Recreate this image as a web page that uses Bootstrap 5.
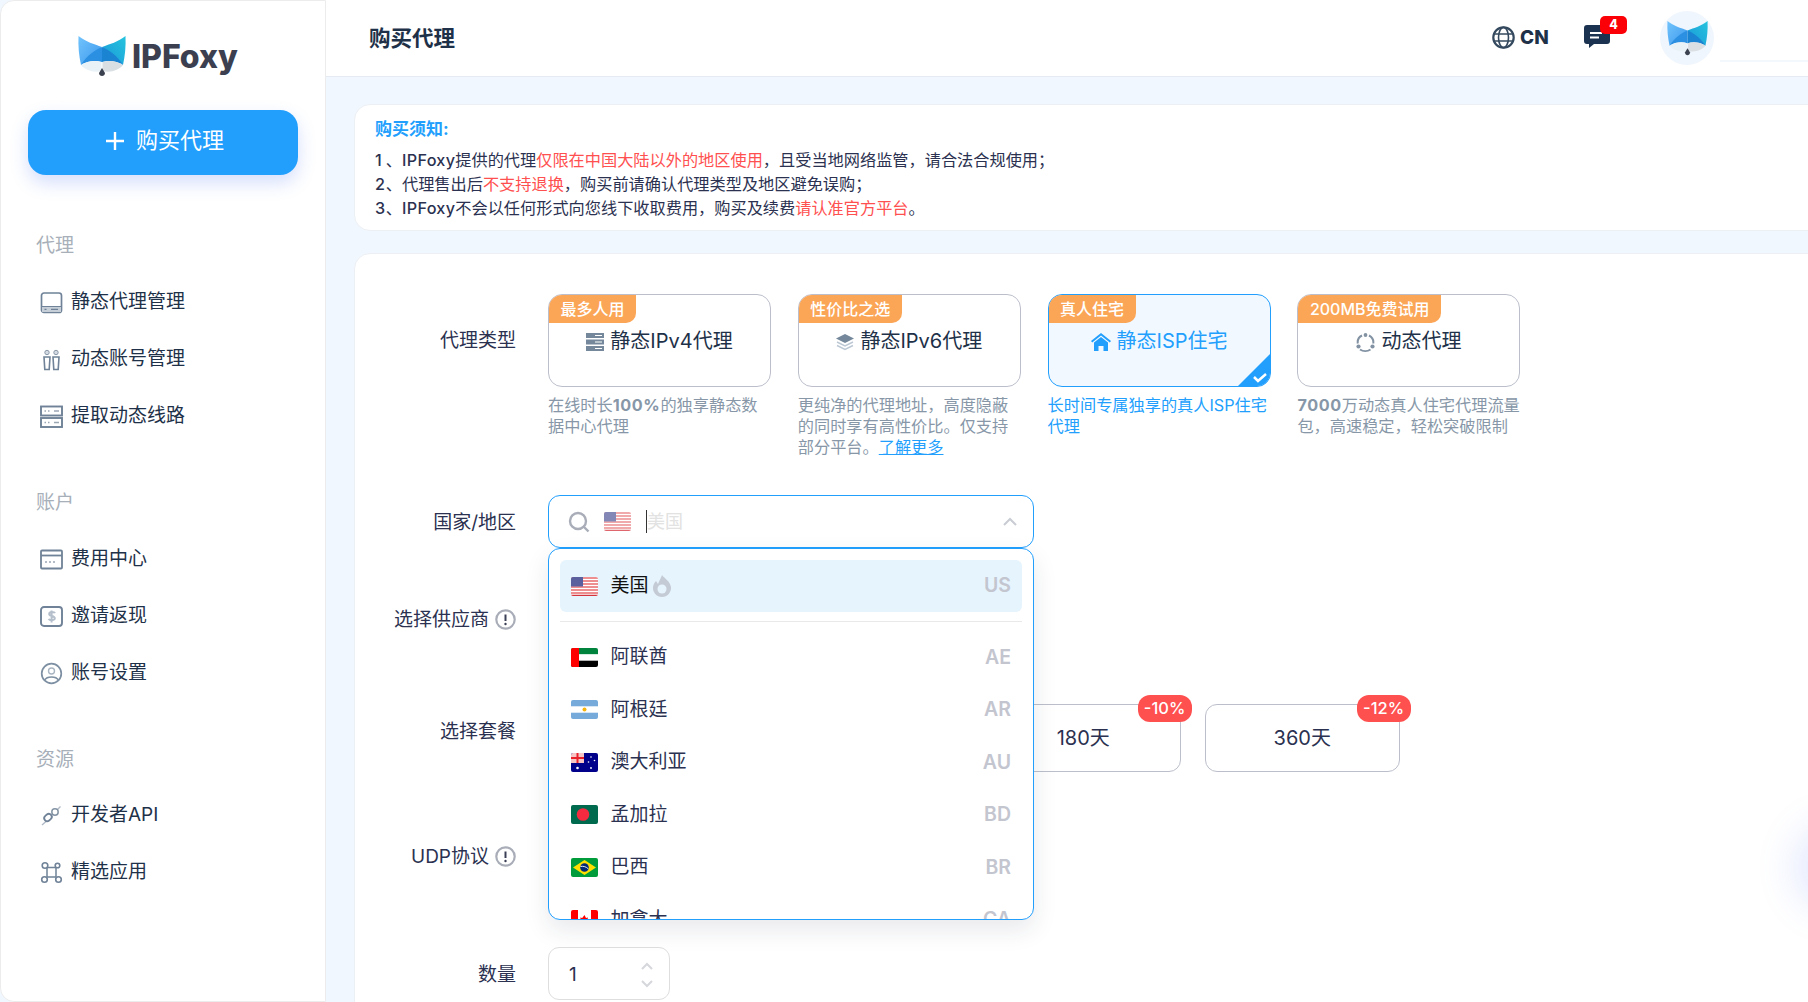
<!DOCTYPE html>
<html lang="zh">
<head>
<meta charset="utf-8">
<title>购买代理</title>
<link href="https://cdn.jsdelivr.net/npm/bootstrap@5.3.0/dist/css/bootstrap.min.css" rel="stylesheet">
<style>
:root{--blue:#229ffd;--ink:#1e3148;--ink2:#2b3150;--muted:#8797a8;--line:#bcbfcb;}
html,body{height:100%;overflow:hidden;}
body{font-family:Inter,"Noto Sans CJK SC","Noto Sans",sans-serif;background:#f1f7fe;color:var(--ink2);width:1808px;height:1002px;}
.shell{height:1002px;width:1808px;}
.side{width:326px;flex:none;background:#fff;border:1px solid #ececec;border-radius:14px 0 0 14px;height:1002px;}
.logo-row{padding:35px 0 0 77px;height:109px;gap:6px;}
.logo-word{font-size:32px;font-weight:800;color:#3b3f4f;line-height:1;letter-spacing:-.05px;margin-top:5px;}
.buy-btn{margin:0 0 0 27px;width:270px;height:65px;border-radius:18px;background:var(--blue);color:#fff;font-size:22px;border:0;box-shadow:0 8px 18px rgba(70,110,240,.22);gap:11px;padding:0 0 4px 3px;}
.buy-btn:hover{background:var(--blue);color:#fff;}
.sec-head{font-size:19px;color:#a7afb9;padding-left:35px;line-height:28px;}
.sec-first{margin-top:57px;}
.sec-next{margin-top:44px;}
.nav-rows{margin-top:14px;}
.nav-last{margin-top:13px;}
.nav-row{height:57px;padding-left:39px;gap:8px;font-size:19px;color:var(--ink);text-decoration:none;}
.nav-row svg{width:23px;height:23px;flex:none;}
.main-col{flex:1;min-width:0;height:1002px;overflow:hidden;position:relative;}
.topbar{height:77px;background:#fff;border-bottom:1px solid #e6ebf2;padding-left:43px;position:relative;}
.page-title{font-size:21.5px;font-weight:600;color:var(--ink);}
.top-tools{position:absolute;top:0;right:0;height:76px;}
.lang{font-size:19px;font-weight:800;color:var(--ink);line-height:23px;}
.tools-inner{width:328px;height:76px;position:relative;}
.t-globe{position:absolute;left:12px;top:26px;gap:5px;}
.t-msg{position:absolute;left:104px;top:25px;width:26px;height:23px;}
.t-badge{position:absolute;left:120px;top:16px;width:27px;height:18px;background:#fb0007;color:#fff;border-radius:5px;font-size:12.5px;font-weight:800;line-height:18px;text-align:center;}
.t-avatar{position:absolute;left:180px;top:11px;width:54px;height:54px;border-radius:50%;background:#f0f6fd;}
.t-line{position:absolute;left:240px;top:60px;width:88px;height:2px;background:#f3f8fe;}
.content{padding:27px 0 0 28px;width:1482px;}
.notice{width:1500px;height:127px;background:#fff;border:1px solid #ecf0f5;border-radius:16px;padding:11px 20px;font-size:16.2px;line-height:24px;}
.notice-title{color:var(--blue);font-weight:700;font-size:17px;line-height:26px;margin-bottom:6px;}
.notice .warn{color:#ff5050;}
.lat{font-weight:500;letter-spacing:.3px;}
.num{display:inline-block;width:10.8px;font-weight:500;}
.form-card{width:1500px;margin-top:22px;background:#fff;border:1px solid #ecf0f5;border-radius:16px;padding:40px 0 0 0;height:900px;position:relative;}
.f-label{width:161px;flex:none;text-align:right;font-size:19px;line-height:28px;color:var(--ink2);margin-right:32px;gap:6px;}
.type-row{height:201px;}
.type-list{gap:26.8px;}
.type-item{width:223px;}
.type-box{height:93px;border:1px solid var(--line);border-radius:14px;position:relative;overflow:hidden;padding-top:32px;font-size:20px;line-height:28px;color:var(--ink);gap:6px;background:#fff;}
.type-tag{position:absolute;left:0;top:0;height:28px;padding:0 11.5px;background:#fba556;color:#fff;font-size:16px;font-weight:500;line-height:28px;border-radius:0 0 10px 0;white-space:nowrap;}
.type-desc{font-size:16.2px;line-height:21px;color:var(--muted);margin-top:8px;}
.type-desc b{font-weight:700;letter-spacing:.6px;}
.type-on .type-box{border-color:var(--blue);background:#f1f8ff;color:var(--blue);}
.type-on .type-desc{color:var(--blue);}
.corner{position:absolute;right:0;bottom:0;width:32px;height:32px;}
.more-link{color:var(--blue);}
.country-row{height:53px;}
.country-row .f-label{padding-top:2px;}
.sel-wrap{width:486px;position:relative;}
.sel-input{height:53px;border:1px solid var(--blue);border-radius:12px;padding:0 12px 0 19px;background:#fff;}
.cursor-bar{width:1px;height:23px;background:#333;margin-left:15px;}
.ph{color:#e2e2e2;font-size:18px;line-height:23px;}
.flag{width:27px;height:19px;flex:none;border-radius:2px;display:block;}
.sel-menu{position:absolute;left:0;top:53px;width:486px;height:372px;border:1px solid var(--blue);border-radius:12px;background:#fff;box-shadow:0 10px 24px rgba(30,40,70,.10);overflow:hidden;z-index:5;padding:11px 11px 0;}
.opt{height:52.5px;padding:0 11px 0 10.500px;font-size:19px;color:var(--ink2);gap:13px;}
.opt-first{height:52px;background:#e6f4fe;border-radius:6px;color:#111;}
.opt-hot{margin-left:-10px;}
.opt-code{margin-left:auto;color:#c3c5cf;font-weight:600;font-size:19.5px;}
.opt-sep{height:1px;background:#e9e9e9;margin:9px 0 9px;}
.plain-row{height:53px;margin-top:44px;}
.plain-row .f-label{padding-top:2px;}
.plan-row{margin-top:59px;height:68px;}
.plan-row .f-label{margin-top:14px;}
.plan-list{gap:24.4px;}
.plan{width:194.6px;height:68px;border:1px solid var(--line);border-radius:12px;position:relative;font-size:20px;color:var(--ink2);background:#fff;}
.plan-off{position:absolute;right:-12px;top:-10px;width:54px;height:27px;border-radius:12px;background:#ff5050;color:#fff;font-size:16.5px;font-weight:500;line-height:27px;text-align:center;}
.udp-row{margin-top:58px;height:53px;}
.qty-row{margin-top:64px;height:53px;}
.qty-row .f-label{padding-top:2px;}
.qty{width:122px;height:53px;border:1px solid #dedede;border-radius:11px;padding:3px 16px 0 20px;font-size:19px;color:var(--ink2);}
.qty-arrows{margin-left:auto;gap:10px;}
.info{width:21px;height:21px;flex:none;}
.glow{position:absolute;right:-60px;top:837px;width:60px;height:60px;border-radius:50%;background:#e9eeff;box-shadow:0 0 40px 12px rgba(105,130,245,.2);}
</style>
</head>
<body>
<div class="shell d-flex">
  <aside class="side">
    <div class="logo-row d-flex align-items-start">
      <svg width="48" height="41" viewBox="0 0 48 41"><defs>
        <linearGradient id="lg1" x1="0" y1="0" x2="1" y2="1"><stop offset="0" stop-color="#72c4fc"/><stop offset="1" stop-color="#3a97ec"/></linearGradient>
        <linearGradient id="lg2" x1="0" y1="1" x2="1" y2="0"><stop offset="0" stop-color="#1a97d8"/><stop offset="1" stop-color="#26c4de"/></linearGradient>
      </defs>
      <path d="M0.500 0 C8 6 16 8 24 11 L3 29 C1 20 0 10 0.500 0Z" fill="url(#lg1)"/>
      <path d="M47.500 0 C40 6 32 8 24 11 L45 29 C47 20 48 10 47.500 0Z" fill="url(#lg2)"/>
      <path d="M3 29 C9 19 17 14 24 11 L24 26 C17 24 9 25 3 29Z" fill="#2b8fe2"/>
      <path d="M45 29 C39 19 31 14 24 11 L24 26 C31 24 39 25 45 29Z" fill="#1b84d2"/>
      <path d="M3 29 C9 25 17 24 23.500 26 L23.500 35 C15 37 7 34 3 29Z" fill="#e9f3f7"/>
      <path d="M45 29 C39 25 31 24 24.500 26 L24.500 35 C33 37 41 34 45 29Z" fill="#d9dfe3"/>
      <path d="M24 32 L27 37 C27 39 25.500 40 24 40 C22.500 40 21 39 21 37Z" fill="#3c4150"/>
      </svg>
      <span class="logo-word">IPFoxy</span>
    </div>
    <button type="button" class="btn buy-btn d-flex align-items-center justify-content-center">
      <svg width="20" height="20" viewBox="0 0 20 20"><path d="M10 1v18M1 10h18" stroke="#fff" stroke-width="2.400"/></svg>
      <span>购买代理</span>
    </button>

    <div class="sec-head sec-first">代理</div>
    <div class="nav-rows">
      <a class="nav-row d-flex align-items-center" href="#">
        <svg viewBox="0 0 23 23"><rect x="1.500" y="2" width="20" height="19.500" rx="2.500" fill="none" stroke="#6f8297" stroke-width="1.700"/><rect x="2" y="15.500" width="19" height="5.500" fill="#c6ced8"/><path d="M2 15.500h19" stroke="#6f8297" stroke-width="1"/><path d="M4.500 18.300h2M11 18.300h7" stroke="#6f8297" stroke-width="1.200"/></svg>
        <span>静态代理管理</span>
      </a>
      <a class="nav-row d-flex align-items-center" href="#">
        <svg viewBox="0 0 23 23"><circle cx="7" cy="4.500" r="2.200" fill="#d4dae2" stroke="#8a99a9"/><circle cx="16" cy="4.500" r="2.200" fill="#d4dae2" stroke="#8a99a9"/><path d="M4 9h6l-.8 12.500H4.800zM13 9h6l-.8 12.500h-4.400z" fill="none" stroke="#6f8297" stroke-width="1.600"/></svg>
        <span>动态账号管理</span>
      </a>
      <a class="nav-row d-flex align-items-center" href="#">
        <svg viewBox="0 0 23 23"><rect x="1" y="1.500" width="21" height="9" fill="none" stroke="#6f8297" stroke-width="1.900"/><rect x="1" y="13" width="21" height="9" fill="none" stroke="#6f8297" stroke-width="1.900"/><path d="M4.500 6h1.500M8 6h1.500M14 6h5M4.500 17.500h1.500M8 17.500h1.500M14 17.500h5" stroke="#9aa7b5" stroke-width="1.600"/></svg>
        <span>提取动态线路</span>
      </a>
    </div>

    <div class="sec-head sec-next">账户</div>
    <div class="nav-rows">
      <a class="nav-row d-flex align-items-center" href="#">
        <svg viewBox="0 0 23 23"><rect x="1" y="2.500" width="21" height="18" rx="1" fill="none" stroke="#6f8297" stroke-width="1.800"/><path d="M1 7.500h21" stroke="#6f8297" stroke-width="1.800"/><path d="M5 14h2M9 14h2M13 14h2" stroke="#9aa7b5" stroke-width="1.600"/></svg>
        <span>费用中心</span>
      </a>
      <a class="nav-row d-flex align-items-center" href="#">
        <svg viewBox="0 0 23 23"><rect x="1" y="2" width="21" height="19" rx="3" fill="none" stroke="#6f8297" stroke-width="1.900"/><path d="M15 8.200c-.6-1.300-5.500-2-5.800.6-.3 2.700 5.700 1.700 5.600 4.500-.1 2.600-5.400 2.100-6.100.5M11.600 5.500v12" fill="none" stroke="#b4bfcb" stroke-width="2"/></svg>
        <span>邀请返现</span>
      </a>
      <a class="nav-row d-flex align-items-center" href="#">
        <svg viewBox="0 0 23 23"><circle cx="11.500" cy="11.500" r="9.800" fill="none" stroke="#7d8fa2" stroke-width="1.700"/><circle cx="11.500" cy="9" r="3" fill="none" stroke="#a9b5c2" stroke-width="1.400"/><path d="M4.800 18c2-4 11.400-4 13.400 0" fill="none" stroke="#7d8fa2" stroke-width="1.500"/></svg>
        <span>账号设置</span>
      </a>
    </div>

    <div class="sec-head sec-next">资源</div>
    <div class="nav-last">
      <a class="nav-row d-flex align-items-center" href="#">
        <svg viewBox="0 0 23 23"><path d="M2 21l4-3.500M20.500 2.500l-3 3" stroke="#b0bbc7" stroke-width="1.400"/><rect x="4" y="10.500" width="8" height="6" rx="3" transform="rotate(-40 8 13.500)" fill="none" stroke="#6f8297" stroke-width="1.800"/><circle cx="15" cy="8" r="3.200" fill="none" stroke="#8494a5" stroke-width="1.500"/></svg>
        <span>开发者API</span>
      </a>
      <a class="nav-row d-flex align-items-center" href="#">
        <svg viewBox="0 0 23 23"><circle cx="5" cy="4.500" r="2.800" fill="none" stroke="#6f8297" stroke-width="1.600"/><circle cx="17.500" cy="4.500" r="2.300" fill="none" stroke="#6f8297" stroke-width="1.600"/><circle cx="4.500" cy="18.500" r="2.800" fill="none" stroke="#6f8297" stroke-width="1.600"/><circle cx="18.500" cy="18.500" r="2.800" fill="none" stroke="#6f8297" stroke-width="1.600"/><path d="M7 6.500h9M7 6.500v9.500M16 6.500v9.500M6.500 16h10" fill="none" stroke="#6f8297" stroke-width="1.500"/></svg>
        <span>精选应用</span>
      </a>
    </div>
  </aside>

  <div class="main-col">
    <header class="topbar d-flex align-items-center">
      <div class="page-title">购买代理</div>
      <div class="top-tools">
        <div class="tools-inner">
          <div class="t-globe d-flex align-items-center">
            <svg width="23" height="23" viewBox="0 0 23 23" fill="none" stroke="#34495e" stroke-width="1.600"><circle cx="11.500" cy="11.500" r="10.200" stroke-width="2.200"/><ellipse cx="11.500" cy="11.500" rx="5" ry="10.200"/><path d="M2 8h19M2 15h19"/></svg>
            <span class="lang">CN</span>
          </div>
          <svg class="t-msg" viewBox="0 0 26 23"><path d="M3 0h20a3 3 0 0 1 3 3v13a3 3 0 0 1-3 3H10l-5 4v-4H3a3 3 0 0 1-3-3V3a3 3 0 0 1 3-3z" fill="#1b3350"/><path d="M6 8h12M6 12.500h9" stroke="#fff" stroke-width="1.800"/></svg>
          <div class="t-badge">4</div>
          <div class="t-avatar d-flex align-items-center justify-content-center">
            <svg width="41" height="35" viewBox="0 0 48 41"><path d="M0.500 0 C8 6 16 8 24 11 L3 29 C1 20 0 10 0.500 0Z" fill="url(#lg1)"/><path d="M47.500 0 C40 6 32 8 24 11 L45 29 C47 20 48 10 47.500 0Z" fill="url(#lg2)"/><path d="M3 29 C9 19 17 14 24 11 L24 26 C17 24 9 25 3 29Z" fill="#2b8fe2"/><path d="M45 29 C39 19 31 14 24 11 L24 26 C31 24 39 25 45 29Z" fill="#1b84d2"/><path d="M3 29 C9 25 17 24 23.500 26 L23.500 35 C15 37 7 34 3 29Z" fill="#e9f3f7"/><path d="M45 29 C39 25 31 24 24.500 26 L24.500 35 C33 37 41 34 45 29Z" fill="#d9dfe3"/><path d="M24 32 L27 37 C27 39 25.500 40 24 40 C22.500 40 21 39 21 37Z" fill="#3c4150"/></svg>
          </div>
          <div class="t-line"></div>
        </div>
      </div>
    </header>

    <div class="content">
      <section class="notice">
        <div class="notice-title">购买须知:</div>
        <div><span class="num">1</span>、<span class="lat">IPFoxy</span>提供的代理<span class="warn">仅限在中国大陆以外的地区使用</span>，且受当地网络监管，请合法合规使用；</div>
        <div><span class="num">2</span>、代理售出后<span class="warn">不支持退换</span>，购买前请确认代理类型及地区避免误购；</div>
        <div><span class="num">3</span>、<span class="lat">IPFoxy</span>不会以任何形式向您线下收取费用，购买及续费<span class="warn">请认准官方平台</span>。</div>
      </section>

      <section class="form-card">
        <div class="type-row d-flex">
          <div class="f-label" style="margin-top:33px">代理类型</div>
          <div class="type-list d-flex">
            <div class="type-item">
              <div class="type-box d-flex justify-content-center align-items-start">
                <span class="type-tag">最多人用</span>
                <svg width="18" height="18" viewBox="0 0 18 18" style="margin-top:6px"><rect width="18" height="5" fill="#75889b"/><rect y="6.500" width="18" height="5" fill="#75889b"/><rect y="13" width="18" height="5" fill="#75889b"/><path d="M9 2.500h7M9 9h7M9 15.500h7" stroke="#fff" stroke-width="1.200"/></svg>
                <span>静态IPv4代理</span>
              </div>
              <div class="type-desc">在线时长<b>100%</b>的独享静态数据中心代理</div>
            </div>
            <div class="type-item">
              <div class="type-box d-flex justify-content-center align-items-start">
                <span class="type-tag">性价比之选</span>
                <svg width="18" height="18" viewBox="0 0 18 18" style="margin-top:6px"><path d="M9 1l9 4.500-9 4.500-9-4.500z" fill="#75889b"/><path d="M1 9l8 4 8-4M1 12.500l8 4 8-4" fill="none" stroke="#bcc8d4" stroke-width="1.500"/></svg>
                <span>静态IPv6代理</span>
              </div>
              <div class="type-desc">更纯净的代理地址，高度隐蔽的同时享有高性价比。仅支持部分平台。<a class="more-link" href="#">了解更多</a></div>
            </div>
            <div class="type-item type-on">
              <div class="type-box d-flex justify-content-center align-items-start">
                <span class="type-tag">真人住宅</span>
                <svg width="20" height="18" viewBox="0 0 20 18" style="margin-top:6px"><path d="M10 0l10 8-1.200 1.400L10 2.500 1.200 9.400 0 8z" fill="#229ffd"/><path d="M3 9.500L10 4l7 5.500V18h-4.500v-5h-5v5H3z" fill="#229ffd"/></svg>
                <span>静态ISP住宅</span>
                <svg class="corner" viewBox="0 0 32 32"><path d="M32 0v24a8 8 0 0 1-8 8H0z" fill="#229ffd"/><path d="M16 23l4 4 8-7" fill="none" stroke="#fff" stroke-width="2.500"/></svg>
              </div>
              <div class="type-desc">长时间专属独享的真人ISP住宅代理</div>
            </div>
            <div class="type-item">
              <div class="type-box d-flex justify-content-center align-items-start">
                <span class="type-tag">200MB免费试用</span>
                <svg width="19" height="19" viewBox="0 0 19 19" style="margin-top:6px" fill="none" stroke="#8292a3" stroke-width="2"><path d="M6 2.500C3 4 1.300 7 1.800 10.500M4 16.500c3 2 7.500 2 10.500 0M17.300 10.500C17.700 7 16 4 13 2.500"/><circle cx="9.500" cy="2" r="1.900" fill="#8292a3" stroke="none"/><circle cx="2.500" cy="13.500" r="2.100" fill="#8292a3" stroke="none"/><circle cx="16.500" cy="13.500" r="2.100" fill="#8292a3" stroke="none"/></svg>
                <span>动态代理</span>
              </div>
              <div class="type-desc"><b>7000</b>万动态真人住宅代理流量包，高速稳定，轻松突破限制</div>
            </div>
          </div>
        </div>

        <div class="country-row d-flex">
          <div class="f-label d-flex align-items-center justify-content-end">国家/地区</div>
          <div class="sel-wrap">
            <div class="sel-input d-flex align-items-center">
              <svg width="22" height="22" viewBox="0 0 22 22" fill="none" stroke="#a9adb8" stroke-width="2.400"><circle cx="10" cy="10" r="8"/><path d="M16 16l4.500 4.500"/></svg>
              <svg class="flag" style="margin-left:14px;opacity:.75" viewBox="0 0 27 19"><use href="#fus"/></svg>
              <span class="cursor-bar"></span><span class="ph">美国</span>
              <svg class="ms-auto me-1" width="14" height="9" viewBox="0 0 14 9" fill="none" stroke="#c9ccd3" stroke-width="2"><path d="M1 8l6-6 6 6"/></svg>
            </div>
            <div class="sel-menu">
              <div class="opt opt-first d-flex align-items-center">
                <svg class="flag" viewBox="0 0 27 19"><g id="fus"><rect width="27" height="19" fill="#fff"/><path d="M0 1h27M0 4h27M0 7h27M0 10h27M0 13h27M0 16h27" stroke="#e8696e" stroke-width="1.500"/><path d="M0 18.400h27" stroke="#d4343b" stroke-width="1.200"/><rect width="12" height="9.500" fill="#5a5f9e"/></g></svg>
                <span>美国</span>
                <svg class="opt-hot" width="20" height="22" viewBox="0 0 20 22"><path d="M10 0c2 3 8 6 9 12 .6 5-3.500 10-9 10S.4 17 1 12c.4-3 2-5 3-6l2 3c1-3 3-6 4-9z" fill="#c5cbd5"/><circle cx="10" cy="14" r="4.500" fill="#e6f4fe"/></svg>
                <span class="opt-code">US</span>
              </div>
              <div class="opt-sep"></div>
              <div class="opt d-flex align-items-center">
                <svg class="flag" viewBox="0 0 27 19"><rect width="27" height="6.400" fill="#00843d"/><rect y="6.400" width="27" height="6.300" fill="#fff"/><rect y="12.700" width="27" height="6.300" fill="#000"/><rect width="8" height="19" fill="#f00"/></svg>
                <span>阿联酋</span><span class="opt-code">AE</span>
              </div>
              <div class="opt d-flex align-items-center">
                <svg class="flag" viewBox="0 0 27 19"><rect width="27" height="19" fill="#75aadb"/><rect y="6.300" width="27" height="6.400" fill="#fff"/><circle cx="13.500" cy="9.500" r="2" fill="#f6b40e"/></svg>
                <span>阿根廷</span><span class="opt-code">AR</span>
              </div>
              <div class="opt d-flex align-items-center">
                <svg class="flag" viewBox="0 0 27 19"><rect width="27" height="19" fill="#00008b"/><rect width="13" height="10" fill="#f6c6c6"/><path d="M6.500 0v10M0 5h13" stroke="#e8202a" stroke-width="2"/><circle cx="6.500" cy="15" r="1.300" fill="#fff"/><circle cx="20" cy="4" r=".8" fill="#fff"/><circle cx="23.500" cy="7.500" r=".8" fill="#fff"/><circle cx="17.500" cy="9" r=".8" fill="#fff"/><circle cx="20" cy="15" r=".9" fill="#fff"/></svg>
                <span>澳大利亚</span><span class="opt-code">AU</span>
              </div>
              <div class="opt d-flex align-items-center">
                <svg class="flag" viewBox="0 0 27 19"><rect width="27" height="19" fill="#006a4e"/><circle cx="12" cy="9.500" r="6.300" fill="#f42a41"/></svg>
                <span>孟加拉</span><span class="opt-code">BD</span>
              </div>
              <div class="opt d-flex align-items-center">
                <svg class="flag" viewBox="0 0 27 19"><rect width="27" height="19" fill="#009c3b"/><path d="M13.500 2L25 9.500 13.500 17 2 9.500z" fill="#ffdf00"/><circle cx="13.500" cy="9.500" r="4.300" fill="#002776"/><path d="M9.500 8.500c3-.6 5.500.2 7.800 2.300" stroke="#fff" stroke-width=".9" fill="none"/></svg>
                <span>巴西</span><span class="opt-code">BR</span>
              </div>
              <div class="opt d-flex align-items-center">
                <svg class="flag" viewBox="0 0 27 19"><rect width="27" height="19" fill="#fff"/><rect width="7" height="19" fill="#f00"/><rect x="20" width="7" height="19" fill="#f00"/><path d="M13.500 5l1.500 3 2-.6-.7 3 1 .8-3.400 2.300-.4 2h-.8l-.4-2-3.400-2.300 1-.8-.7-3 2 .6z" fill="#f00"/></svg>
                <span>加拿大</span><span class="opt-code">CA</span>
              </div>
            </div>
          </div>
        </div>

        <div class="plain-row d-flex">
          <div class="f-label d-flex align-items-center justify-content-end">选择供应商
            <svg class="info" viewBox="0 0 21 21"><circle cx="10.500" cy="10.500" r="9.200" fill="none" stroke="#a9adb8" stroke-width="2.200"/><path d="M10.500 5.500v6.500" stroke="#3a3f55" stroke-width="2"/><circle cx="10.500" cy="15" r="1.200" fill="#3a3f55"/></svg>
          </div>
        </div>

        <div class="plan-row d-flex">
          <div class="f-label">选择套餐</div>
          <div class="plan-list d-flex">
            <div class="plan"></div>
            <div class="plan"></div>
            <div class="plan d-flex align-items-center justify-content-center">180天<span class="plan-off">-10%</span></div>
            <div class="plan d-flex align-items-center justify-content-center">360天<span class="plan-off">-12%</span></div>
          </div>
        </div>

        <div class="udp-row d-flex">
          <div class="f-label d-flex align-items-center justify-content-end">UDP协议
            <svg class="info" viewBox="0 0 21 21"><circle cx="10.500" cy="10.500" r="9.200" fill="none" stroke="#a9adb8" stroke-width="2.200"/><path d="M10.500 5.500v6.500" stroke="#3a3f55" stroke-width="2"/><circle cx="10.500" cy="15" r="1.200" fill="#3a3f55"/></svg>
          </div>
        </div>

        <div class="qty-row d-flex">
          <div class="f-label d-flex align-items-center justify-content-end">数量</div>
          <div class="qty d-flex align-items-center">
            <span>1</span>
            <div class="qty-arrows d-flex flex-column">
              <svg width="12" height="8" viewBox="0 0 12 8" fill="none" stroke="#d5d7dc" stroke-width="2"><path d="M1 7l5-5 5 5"/></svg>
              <svg width="12" height="8" viewBox="0 0 12 8" fill="none" stroke="#d5d7dc" stroke-width="2"><path d="M1 1l5 5 5-5"/></svg>
            </div>
          </div>
        </div>
      </section>
    </div>
    <div class="glow"></div>
  </div>
</div>
<script src="https://cdn.jsdelivr.net/npm/bootstrap@5.3.0/dist/js/bootstrap.bundle.min.js"></script>
</body>
</html>
